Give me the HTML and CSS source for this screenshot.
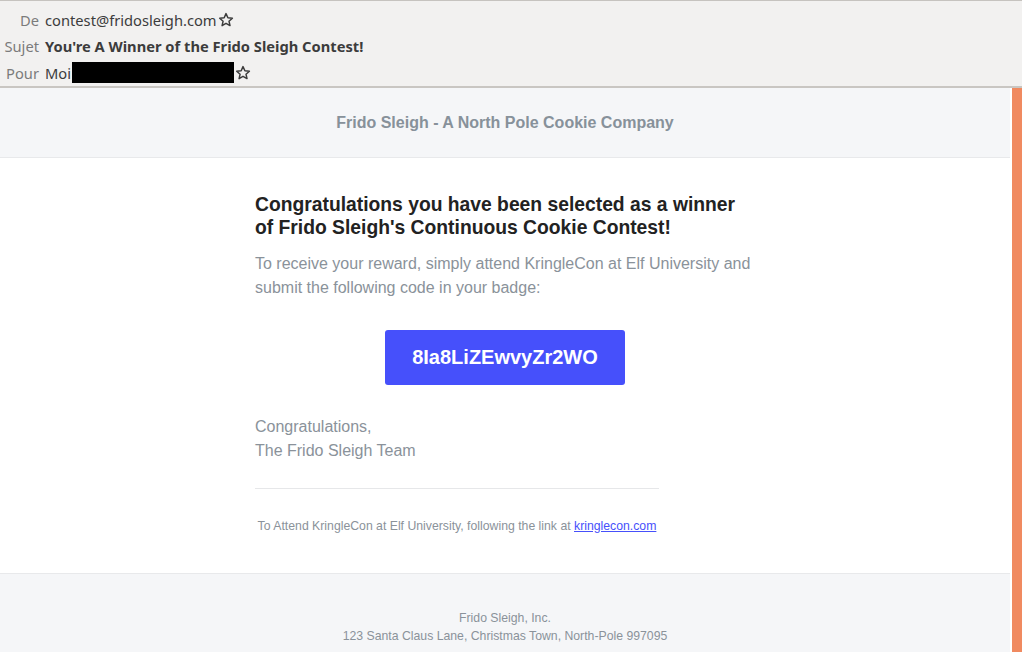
FILE: index.html
```html
<!DOCTYPE html>
<html>
<head>
<meta charset="utf-8">
<link rel="stylesheet" href="styles.css">
</head>
<body>
<div class="mailhead">
  <div class="row"><span class="lbl">De</span><span class="val">contest@fridosleigh.com</span><svg class="star" viewBox="0 0 16 16"><path d="M8 1.6l1.9 4.1 4.5.5-3.4 3 1 4.4L8 11.3l-3.9 2.3 1-4.4-3.4-3 4.5-.5z" fill="none" stroke="#3c3c3c" stroke-width="1.5" stroke-linejoin="round"/></svg></div>
  <div class="row"><span class="lbl">Sujet</span><span class="val bold">You're A Winner of the Frido Sleigh Contest!</span></div>
  <div class="row"><span class="lbl">Pour</span><span class="val">Moi</span><span class="redact"></span><svg class="star" viewBox="0 0 16 16"><path d="M8 1.6l1.9 4.1 4.5.5-3.4 3 1 4.4L8 11.3l-3.9 2.3 1-4.4-3.4-3 4.5-.5z" fill="none" stroke="#3c3c3c" stroke-width="1.5" stroke-linejoin="round"/></svg></div>
</div>
<div class="viewer">
  <div class="mail">
    <div class="brand">Frido Sleigh - A North Pole Cookie Company</div>
    <div class="content">
      <div class="column">
        <h1 class="title">Congratulations you have been selected as a winner of Frido Sleigh's Continuous Cookie Contest!</h1>
        <p class="text">To receive your reward, simply attend KringleCon at Elf University and submit the following code in your badge:</p>
        <div class="btnwrap"><span class="code">8Ia8LiZEwvyZr2WO</span></div>
        <p class="text sign">Congratulations,<br>The Frido Sleigh Team</p>
        <div class="rule"></div>
        <p class="small">To Attend KringleCon at Elf University, following the link at <a href="#">kringlecon.com</a></p>
      </div>
    </div>
    <div class="foot">
      <div>Frido Sleigh, Inc.</div>
      <div>123 Santa Claus Lane, Christmas Town, North-Pole 997095</div>
    </div>
  </div>
  <div class="scroll"><div class="thumb"></div></div>
</div>
</body>
</html>
```
FILE: styles.css
```css
html, body { margin: 0; padding: 0; }
body { width: 1022px; height: 652px; overflow: hidden; background: #fff; }
.mailhead {
  background: #f2f1f0;
  border-top: 1px solid #c6c3bf;
  border-bottom: 2px solid #c9c6c2;
  font-family: "Noto Sans", "DejaVu Sans", sans-serif;
  font-size: 14.7px;
  color: #3c3c3c;
  display: flex;
  flex-direction: column;
  padding-top: 6px;
  height: 79px;
}
.row { display: flex; align-items: center; height: 26.5px; }
.lbl { width: 39px; text-align: right; color: #7b7b7b; margin-right: 6px; }
.val { white-space: nowrap; }
.bold { font-weight: bold; }
.redact { display: inline-block; width: 162px; height: 21px; background: #000; margin-left: 1px; }
.star { width: 16px; height: 16px; margin-left: 1px; }
.viewer { display: flex; height: 564px; }
.mail { flex: 1; background: #fff; font-family: "Liberation Sans", Arial, sans-serif; }
.scroll { width: 12px; background: #fff; display: flex; }
.thumb { width: 10px; margin-left: 2px; background: #f08a60; }
.brand {
  background: #f5f6f8;
  height: 69px;
  border-bottom: 1px solid #e8e9eb;
  display: flex; align-items: center; justify-content: center;
  font-size: 16px; font-weight: bold; color: #87919a;
}
.content { display: flex; justify-content: center; height: 415px; border-bottom: 1px solid #e8e9eb; }
.column { width: 500px; padding-top: 35px; box-sizing: border-box; }
.title { margin: 0; font-size: 19.3px; line-height: 23px; font-weight: bold; color: #222; }
.text { margin: 13px 0 0; font-size: 16px; line-height: 24px; color: #8a929a; }
.btnwrap { display: flex; justify-content: center; margin-top: 30px; }
.code {
  width: 240px; height: 55px; border-radius: 3px; background: #4650fb; color: #fff;
  font-size: 20px; font-weight: bold; display: flex; align-items: center; justify-content: center;
}
.sign { margin-top: 30px; }
.rule { width: 404px; height: 1px; background: #e6e7e9; margin-top: 25px; }
.small { width: 404px; text-align: center; margin: 30px 0 0; font-size: 12.25px; color: #8a929a; }
.small a { color: #4650fb; }
.foot {
  background: #f5f6f8; height: 79px; padding-top: 35px; box-sizing: border-box;
  text-align: center; font-size: 12.25px; line-height: 18px; color: #8a929a;
}
```
